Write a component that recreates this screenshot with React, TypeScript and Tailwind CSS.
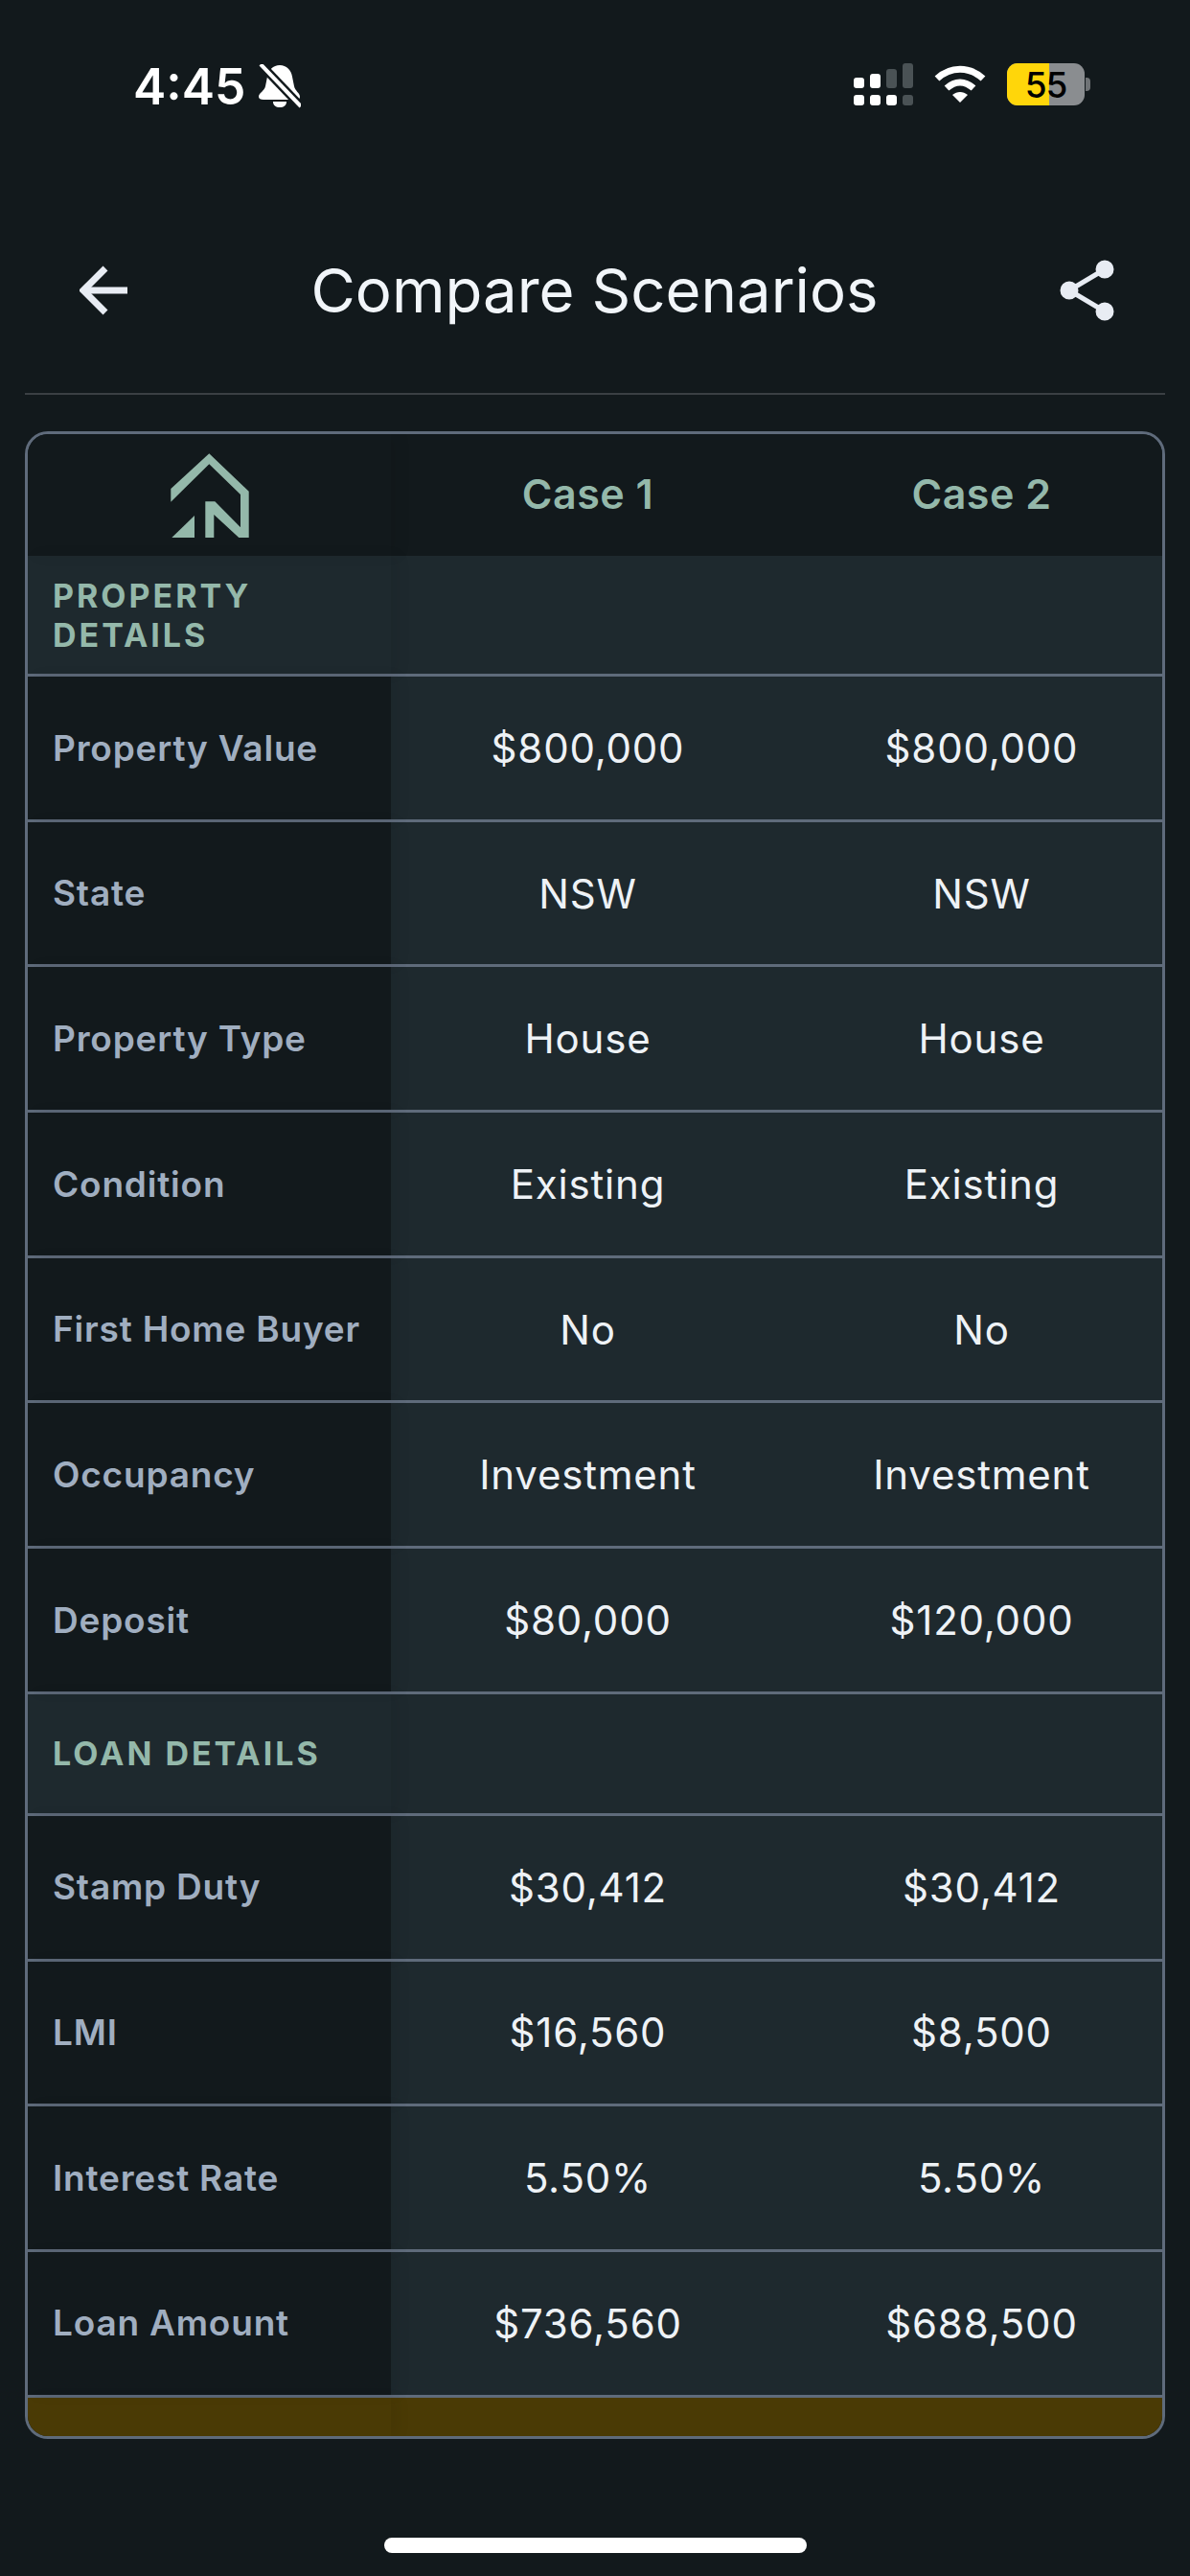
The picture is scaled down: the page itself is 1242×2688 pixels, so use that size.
type Row = { label: string; a?: string; b?: string; section?: boolean; tall?: boolean };

const rows: Row[] = [
  { label: "PROPERTY DETAILS", section: true, tall: true },
  { label: "Property Value", a: "$800,000", b: "$800,000" },
  { label: "State", a: "NSW", b: "NSW" },
  { label: "Property Type", a: "House", b: "House" },
  { label: "Condition", a: "Existing", b: "Existing" },
  { label: "First Home Buyer", a: "No", b: "No" },
  { label: "Occupancy", a: "Investment", b: "Investment" },
  { label: "Deposit", a: "$80,000", b: "$120,000" },
  { label: "LOAN DETAILS", section: true },
  { label: "Stamp Duty", a: "$30,412", b: "$30,412" },
  { label: "LMI", a: "$16,560", b: "$8,500" },
  { label: "Interest Rate", a: "5.50%", b: "5.50%" },
  { label: "Loan Amount", a: "$736,560", b: "$688,500" },
];

function StatusBar() {
  return (
    <div className="flex h-[178px] items-start justify-between pl-[139px] pr-[104px] pt-[65px]">
      <div className="flex items-center gap-[14px]">
        <span className="text-[51.5px] font-semibold leading-[50px] text-white">4:45</span>
        <svg width="44" height="46" viewBox="0 0 44 46" fill="white">
          <path d="M22 1c7 0 12 5 13 12l2 10c1 5 6 7 6 11 0 2-1 3-4 3H5c-3 0-5-1-5-3 0-4 6-6 7-11l2-10C10 6 15 1 22 1z" />
          <path d="M15 39h14c0 4-3 6-7 6s-7-2-7-6z" />
          <path d="M2 0 44 44" stroke="#12191c" strokeWidth="9" />
          <path d="M2 0 44 44" stroke="white" strokeWidth="4" />
        </svg>
      </div>
      <div className="flex items-center gap-[22px] pt-[1px]">
        <svg width="62" height="44" viewBox="0 0 62 44">
          <g fill="white">
            <rect x="0" y="15" width="11" height="11" rx="3" />
            <rect x="17" y="11" width="11" height="15" rx="3" />
            <rect x="0" y="33" width="11" height="11" rx="3" />
            <rect x="17" y="33" width="11" height="11" rx="3" />
            <rect x="34" y="33" width="11" height="11" rx="3" />
          </g>
          <g fill="#4a5255">
            <rect x="34" y="6" width="11" height="20" rx="3" />
            <rect x="51" y="0" width="11" height="26" rx="3" />
            <rect x="51" y="33" width="11" height="11" rx="3" />
          </g>
        </svg>
        <svg width="54" height="40" viewBox="0 0 54 40" fill="none" stroke="white" strokeWidth="7">
          <path d="M3 14C17 1 37 1 51 14" />
          <path d="M13 24c9-8 19-8 28 0" />
          <path d="M19 31c5-4 11-4 16 0l-8 8z" fill="white" stroke="none" />
        </svg>
        <div className="flex items-center gap-[1px]">
          <div className="relative flex h-[44px] w-[81px] items-center justify-center overflow-hidden rounded-[11px] bg-[#8a8d90]">
            <div className="absolute inset-y-0 left-0 w-[44px] bg-[#ffd60a]" />
            <span className="relative text-[37px] font-medium leading-none tracking-[-1px] text-black">55</span>
          </div>
          <div className="h-[14px] w-[5px] rounded-r-[4px] bg-[#6f7376]" />
        </div>
      </div>
    </div>
  );
}

function Header() {
  return (
    <div className="mx-[26px] flex h-[234px] items-center justify-between border-b-2 border-[#3a3f43] pl-[57px] pr-[52px] pt-[18px]">
      <svg width="52" height="52" viewBox="0 0 52 52" fill="none" stroke="#e8ecf3" strokeWidth="7">
        <path d="M50 26H5" />
        <path d="M27 3 4 26l23 23" />
      </svg>
      <h1 className="text-[63.5px] font-normal leading-none text-[#f1f5f9]">Compare Scenarios</h1>
      <svg width="58" height="64" viewBox="0 0 58 64" fill="#e8ecf3" stroke="#e8ecf3" strokeWidth="5">
        <circle cx="47" cy="10" r="7" />
        <circle cx="10" cy="32" r="7" />
        <circle cx="47" cy="54" r="7" />
        <path d="M47 10 10 32l37 22" fill="none" />
      </svg>
    </div>
  );
}

function Logo() {
  return (
    <svg width="82" height="88" viewBox="0 0 82 88" fill="#94b8aa">
      <path d="M0.3 37 40.3 0.3 81.7 39.7V88H71.3L45.3 64V88H36.3V50.3H46.3L73 77.3V43L40.3 11.3 0.3 50.7Z" />
      <path d="M1.3 88 25 65V88Z" />
    </svg>
  );
}

function TableRow({ row }: { row: Row }) {
  if (row.section) {
    return (
      <div className={`grid grid-cols-[379px_411px_411px] border-b-[3px] border-[#5f6b7b] bg-[#1e292e] ${row.tall ? "h-[126px]" : "h-[127px]"}`}>
        <div className="flex items-center pl-[26px] pr-[27px] shadow-[8px_0_14px_rgba(0,0,0,0.06)]">
          <span className="text-[34px] font-bold leading-[41px] tracking-[3px] text-[#94b8aa]">{row.label}</span>
        </div>
      </div>
    );
  }
  return (
    <div className="grid h-[151.7px] grid-cols-[379px_411px_411px] border-b-[3px] border-[#5f6b7b] bg-[#1e292e]">
      <div className="flex items-center bg-[#12191c] pl-[26px] shadow-[8px_0_14px_rgba(0,0,0,0.06)]">
        <span className="whitespace-nowrap text-[37px] font-semibold tracking-[0.8px] text-[#a0aec0]">{row.label}</span>
      </div>
      <div className="flex items-center justify-center text-[42px] tracking-[0.8px] text-[#eef2f6]">{row.a}</div>
      <div className="flex items-center justify-center text-[42px] tracking-[0.8px] text-[#eef2f6]">{row.b}</div>
    </div>
  );
}

export default function App() {
  return (
    <div className="h-[2688px] w-[1242px] overflow-hidden bg-[#12191c] font-['Inter',sans-serif]">
      <StatusBar />
      <Header />
      <div className="mx-[26px] mt-[38px] overflow-hidden rounded-[24px] border-[3px] border-[#5f6b7b]">
        <div className="grid h-[127px] grid-cols-[379px_411px_411px] bg-[#12191c]">
          <div className="flex items-center justify-center shadow-[8px_0_14px_rgba(0,0,0,0.06)]">
            <Logo />
          </div>
          <div className="flex items-center justify-center pb-[2px] text-[43px] font-semibold tracking-[0.5px] text-[#94b8aa]">Case 1</div>
          <div className="flex items-center justify-center pb-[2px] text-[43px] font-semibold tracking-[0.5px] text-[#94b8aa]">Case 2</div>
        </div>
        {rows.map((row) => (
          <TableRow key={row.label} row={row} />
        ))}
        <div className="grid h-[40px] grid-cols-[379px_822px] bg-[#4a3a05]">
          <div className="shadow-[8px_0_14px_rgba(0,0,0,0.06)]" />
        </div>
      </div>
      <div className="mt-[103px] flex justify-center">
        <div className="h-[16px] w-[441px] rounded-full bg-white" />
      </div>
    </div>
  );
}
